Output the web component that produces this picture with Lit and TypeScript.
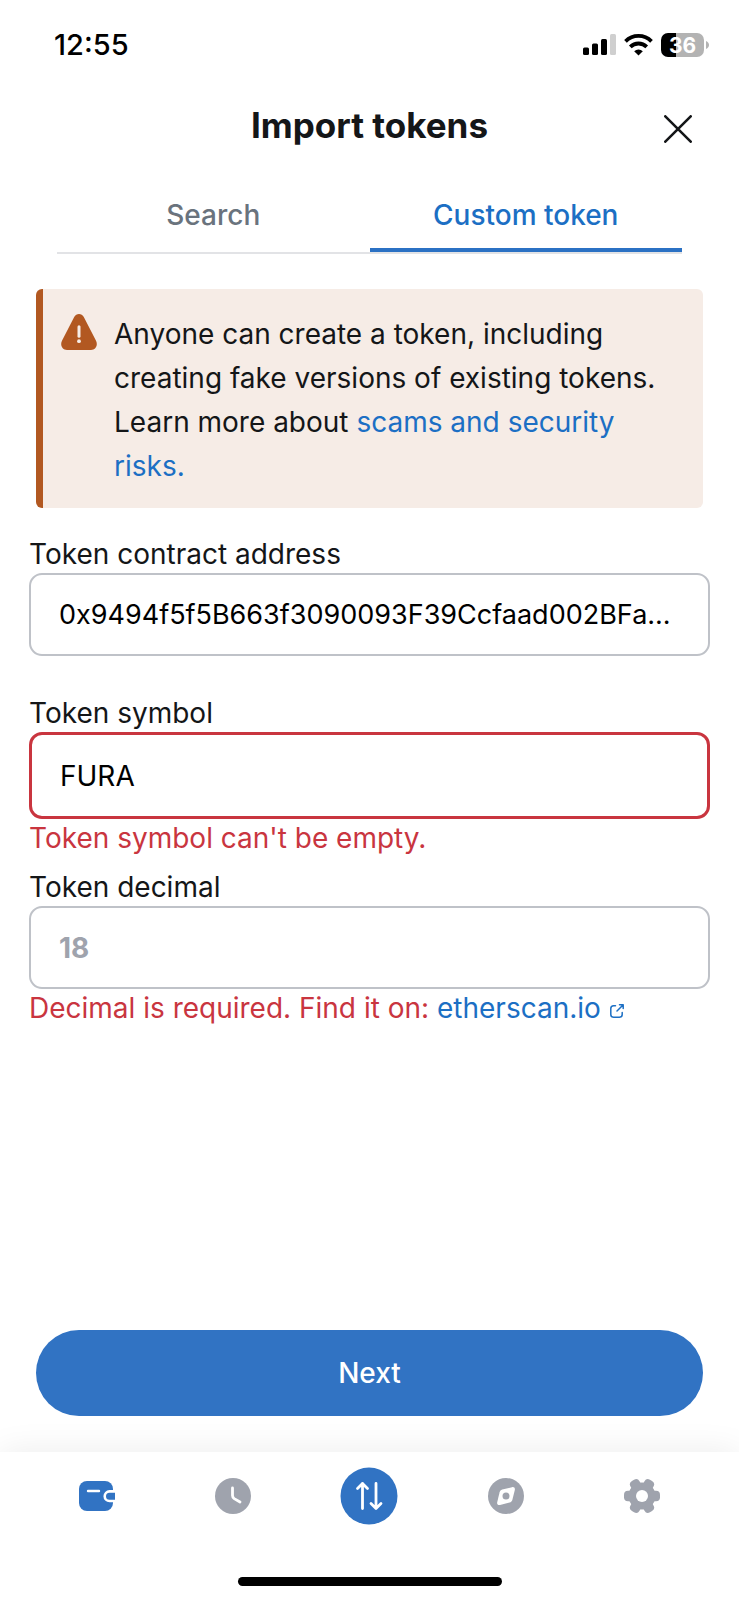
import { LitElement, html, css, svg, nothing } from "lit";
import { customElement, property, state } from "lit/decorators.js";
import { classMap } from "lit/directives/class-map.js";

const TABS = ["Search", "Custom token"];

const NAV_ITEMS = [
  {
    name: "Wallet",
    icon: svg`
      <rect x="0" y="3" width="34" height="30" rx="8" fill="currentColor" />
      <path d="M9 13H20" stroke="#fff" stroke-width="2.4" stroke-linecap="round" />
      <path d="M37 13.4H30.5A4.8 4.8 0 0 0 30.5 23H37" fill="currentColor" stroke="#fff" stroke-width="2.6" />`,
  },
  {
    name: "Activity",
    icon: svg`
      <circle cx="18" cy="18" r="18" fill="currentColor" />
      <path d="M17.5 10V17.5C17.5 19 18 19.8 19.2 20.6L25 24" fill="none" stroke="#fff" stroke-width="2.8" stroke-linecap="round" />`,
  },
  { name: "Swap", icon: nothing },
  {
    name: "Browser",
    icon: svg`
      <circle cx="18" cy="18" r="18" fill="currentColor" />
      <path d="M14.2 11.6L24 9.2C26 8.8 27.2 10 26.8 12L24.4 21.8C24 23.2 23 24.2 21.6 24.6L12 27C10 27.4 8.8 26.2 9.2 24.2L11.6 14.2C12 12.8 12.8 12 14.2 11.6Z" fill="#fff" />
      <circle cx="18" cy="18" r="3.5" fill="currentColor" />`,
  },
  {
    name: "Settings",
    icon: svg`
      <g fill="currentColor">
        <circle cx="18" cy="18" r="13.5" />
        <rect x="0" y="12.8" width="36" height="10.4" rx="4" />
        <rect x="0" y="12.8" width="36" height="10.4" rx="4" transform="rotate(60 18 18)" />
        <rect x="0" y="12.8" width="36" height="10.4" rx="4" transform="rotate(120 18 18)" />
      </g>
      <circle cx="18" cy="18" r="6" fill="#fff" />`,
  },
];

@customElement("status-bar")
class StatusBar extends LitElement {
  static styles = css`
    :host {
      display: flex;
      justify-content: space-between;
      align-items: center;
      height: 89px;
      padding: 0 30px 0 54px;
      font-size: 29px;
      font-weight: 500;
      color: #000;
    }
    .indicators {
      display: flex;
      align-items: center;
      gap: 8px;
    }
    svg {
      display: block;
    }
    .power {
      display: flex;
      align-items: center;
      gap: 2px;
    }
    .battery {
      width: 43px;
      height: 24px;
      border-radius: 7px;
      background: linear-gradient(to right, #000 36%, #b3b3b3 36%);
      color: #fff;
      font-size: 21px;
      line-height: 25px;
      font-weight: 700;
      text-align: center;
    }
  `;

  render() {
    return html`
      <time>12:55</time>
      <div class="indicators">
        <svg width="33" height="22" viewBox="0 0 33 22" aria-hidden="true">
          <rect x="0" y="13.5" width="6" height="7.5" rx="1.5" />
          <rect x="9" y="9.5" width="6" height="11.5" rx="1.5" />
          <rect x="18" y="5" width="6" height="16" rx="1.5" />
          <rect x="27" y="0" width="6" height="21" rx="1.5" fill="#cfcfcf" />
        </svg>
        <svg width="29" height="22" viewBox="0 0 29 22" aria-hidden="true">
          <g fill="none" stroke="#000" stroke-width="3.8">
            <path d="M1.5 7.3A18.5 18.5 0 0 1 27.5 7.3" />
            <path d="M6.3 12.8A11.8 11.8 0 0 1 22.7 12.8" />
          </g>
          <path d="M10.2 17.2A6.2 6.2 0 0 1 18.8 17.2L14.5 21.5Z" />
        </svg>
        <div class="power">
          <div class="battery">36</div>
          <svg width="3" height="8" viewBox="0 0 3 8" aria-hidden="true">
            <path d="M0 0C4 1.5 4 6.5 0 8Z" fill="#b3b3b3" />
          </svg>
        </div>
      </div>
    `;
  }
}

@customElement("token-field")
class TokenField extends LitElement {
  @property() label = "";
  @property() value = "";
  @property() placeholder = "";
  @property({ type: Boolean }) invalid = false;
  @property({ type: Boolean }) compact = false;

  static styles = css`
    :host {
      display: block;
    }
    label {
      display: block;
      line-height: 38px;
      color: #141618;
    }
    input {
      display: block;
      box-sizing: border-box;
      width: 100%;
      height: 83px;
      padding: 0 28px;
      border: 2px solid #bfc2c8;
      border-radius: 13px;
      background: #fff;
      color: #000;
      font: inherit;
      text-overflow: ellipsis;
      outline: none;
    }
    input::placeholder {
      color: #9fa3ad;
      font-weight: 700;
      opacity: 1;
    }
    .compact {
      font-size: 27px;
    }
    .invalid {
      height: 87px;
      border: 3px solid #c9353f;
    }
    .message {
      display: block;
      line-height: 38px;
      color: #c9353f;
    }
  `;

  render() {
    return html`
      <label for="control">${this.label}</label>
      <input
        id="control"
        type="text"
        class=${classMap({ invalid: this.invalid, compact: this.compact })}
        .value=${this.value}
        placeholder=${this.placeholder}
        aria-describedby="message"
      />
      <div class="message" id="message"><slot></slot></div>
    `;
  }
}

@customElement("app-root")
class AppRoot extends LitElement {
  @state() private tab = 1;

  static styles = css`
    :host {
      display: flex;
      flex-direction: column;
      min-height: 100vh;
      background: #fff;
      color: #141618;
      font-family: Inter, "Liberation Sans", sans-serif;
      font-size: 28px;
    }
    button {
      border: 0;
      background: none;
      padding: 0;
      font: inherit;
      cursor: pointer;
    }
    a {
      color: #1c6fc4;
      text-decoration: none;
    }
    svg {
      display: block;
    }
    .header {
      display: grid;
      grid-template-columns: 28px 1fr 28px;
      align-items: center;
      height: 80px;
      padding: 0 47px;
    }
    .title {
      grid-column: 2;
      margin: 0;
      font-size: 35px;
      line-height: 73px;
      font-weight: 700;
      text-align: center;
      align-self: start;
    }
    .tabs {
      display: grid;
      grid-template-columns: 1fr 1fr;
      margin: 9px 57px 0;
      border-bottom: 2px solid #e2e3e6;
    }
    .tab {
      height: 74px;
      border-bottom: 4px solid transparent;
      padding-top: 4px;
      color: #6a737d;
      font-weight: 500;
    }
    .active {
      border-color: #2b71c4;
      color: #1c6fc4;
    }
    .alert {
      display: flex;
      gap: 17px;
      margin: 35px 36px 0;
      padding: 23px 30px 20px 18px;
      border-left: 7px solid #b25821;
      border-radius: 6px;
      background: #f6ece6;
    }
    .alert-icon {
      flex: none;
      margin-top: 2px;
    }
    .alert-text {
      margin: 0;
      line-height: 44px;
    }
    .form {
      display: flex;
      flex-direction: column;
      margin: 27px 29px 0;
    }
    .address {
      height: 159px;
    }
    .symbol {
      margin-bottom: 11px;
    }
    .explorer {
      display: inline-flex;
      align-items: baseline;
      gap: 9px;
    }
    .actions {
      margin-top: auto;
      padding: 40px 36px 36px;
    }
    .next {
      display: block;
      width: 100%;
      height: 86px;
      border-radius: 43px;
      background: #3173c3;
      color: #fff;
      font-weight: 500;
    }
    .bottom {
      display: flex;
      flex-direction: column;
      align-items: center;
      height: 148px;
      background: #fff;
      box-shadow: 0 0 32px rgba(0, 0, 0, 0.08);
    }
    .nav {
      display: grid;
      grid-template-columns: repeat(5, 1fr);
      justify-items: center;
      align-items: center;
      align-self: stretch;
      height: 88px;
      padding: 0 29px;
    }
    .nav-item {
      color: #9fa3ad;
    }
    .current {
      color: #3173c3;
    }
    .home-indicator {
      width: 264px;
      height: 9px;
      margin-top: 37px;
      border-radius: 5px;
      background: #000;
    }
  `;

  private renderNavItem(item: (typeof NAV_ITEMS)[number], index: number) {
    return html`
      <button
        class=${classMap({ "nav-item": true, current: index === 0 })}
        aria-label=${item.name}
      >
        ${item.name === "Swap"
          ? html`<svg width="58" height="58" viewBox="0 0 58 58">
              <circle cx="29" cy="29" r="28.5" fill="#3173c3" />
              <g fill="none" stroke="#fff" stroke-width="2.8" stroke-linecap="round" stroke-linejoin="round">
                <path d="M22.5 41.5V16.5M17.5 21.5L22.5 16.5L27.5 21.5" />
                <path d="M36 16.5V41.5M31 36.5L36 41.5L41 36.5" />
              </g>
            </svg>`
          : html`<svg width="36" height="36" viewBox="0 0 36 36">${item.icon}</svg>`}
      </button>
    `;
  }

  render() {
    return html`
      <status-bar></status-bar>
      <header class="header">
        <h1 class="title">Import tokens</h1>
        <button aria-label="Close">
          <svg width="28" height="28" viewBox="0 0 28 28">
            <path d="M1.3 1.3L26.7 26.7M26.7 1.3L1.3 26.7" stroke="#141618" stroke-width="2.6" stroke-linecap="round" />
          </svg>
        </button>
      </header>
      <div class="tabs" role="tablist">
        ${TABS.map(
          (name, i) => html`<button
            role="tab"
            class=${classMap({ tab: true, active: this.tab === i })}
            aria-selected=${this.tab === i}
            @click=${() => (this.tab = i)}
          >${name}</button>`
        )}
      </div>
      <section class="alert">
        <svg class="alert-icon" width="36" height="36" viewBox="0 0 36 36" aria-hidden="true">
          <path d="M13.2 3C15.3 -0.9 20.7 -0.9 22.8 3L34.9 26.5C37.3 31.1 34.7 36 30 36H6C1.3 36 -1.3 31.1 1.1 26.5Z" fill="#b25821" />
          <path d="M18 12.8V22.2" stroke="#f6ece6" stroke-width="3" stroke-linecap="round" />
          <circle cx="18" cy="27.2" r="1.9" fill="#f6ece6" />
        </svg>
        <p class="alert-text">
          Anyone can create a token, including creating fake versions of existing tokens. Learn more about
          <a href="#scams">scams and security risks.</a>
        </p>
      </section>
      <form class="form" @submit=${(e: Event) => e.preventDefault()}>
        <token-field
          class="address"
          label="Token contract address"
          value="0x9494f5f5B663f3090093F39Ccfaad002BFa..."
          compact
        ></token-field>
        <token-field class="symbol" label="Token symbol" value="FURA" invalid>Token symbol can't be empty.</token-field>
        <token-field label="Token decimal" placeholder="18">Decimal is required. Find it on:
          <a class="explorer" href="#etherscan">etherscan.io<svg width="14" height="14" viewBox="0 0 14 14" aria-hidden="true">
            <g fill="none" stroke="currentColor" stroke-width="1.5" stroke-linecap="round" stroke-linejoin="round">
              <path d="M5.5 1.8H3.6C1.8 1.8 0.8 2.8 0.8 4.6V10.4C0.8 12.2 1.8 13.2 3.6 13.2H9.4C11.2 13.2 12.2 12.2 12.2 10.4V8.5" />
              <path d="M7 7L13 1M9.5 0.8H13.2V4.5" />
            </g>
          </svg></a></token-field>
      </form>
      <div class="actions">
        <button class="next">Next</button>
      </div>
      <footer class="bottom">
        <nav class="nav">${NAV_ITEMS.map((item, i) => this.renderNavItem(item, i))}</nav>
        <div class="home-indicator"></div>
      </footer>
    `;
  }
}
